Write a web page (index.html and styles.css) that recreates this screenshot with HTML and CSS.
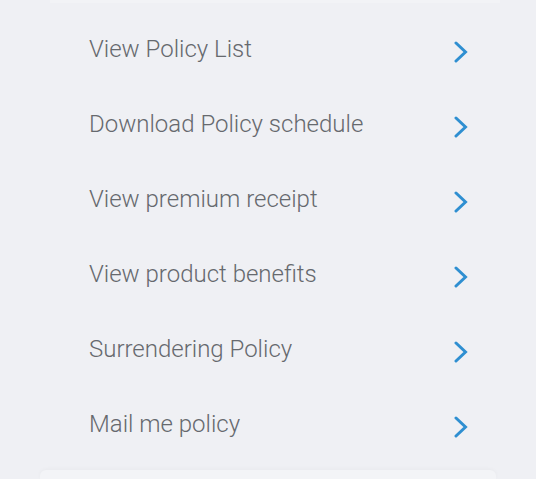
FILE: index.html
```html
<!DOCTYPE html>
<html>
<head>
<meta charset="utf-8">
<link rel="stylesheet" href="styles.css">
</head>
<body>
<div class="page">
  <div class="card-edge top"></div>
  <ul class="menu">
    <li class="item"><span class="label">View Policy List</span><svg class="chev" viewBox="0 0 14 22"><path d="M2 2 L11.5 11 L2 20"/></svg></li>
    <li class="item"><span class="label">Download Policy schedule</span><svg class="chev" viewBox="0 0 14 22"><path d="M2 2 L11.5 11 L2 20"/></svg></li>
    <li class="item"><span class="label">View premium receipt</span><svg class="chev" viewBox="0 0 14 22"><path d="M2 2 L11.5 11 L2 20"/></svg></li>
    <li class="item"><span class="label">View product benefits</span><svg class="chev" viewBox="0 0 14 22"><path d="M2 2 L11.5 11 L2 20"/></svg></li>
    <li class="item"><span class="label">Surrendering Policy</span><svg class="chev" viewBox="0 0 14 22"><path d="M2 2 L11.5 11 L2 20"/></svg></li>
    <li class="item"><span class="label">Mail me policy</span><svg class="chev" viewBox="0 0 14 22"><path d="M2 2 L11.5 11 L2 20"/></svg></li>
  </ul>
  <div class="card-edge bottom"></div>
</div>
</body>
</html>
```
FILE: styles.css
```css
html, body {
  margin: 0;
  padding: 0;
  background: #eff0f4;
  width: 536px;
  height: 479px;
  overflow: hidden;
}
.page {
  position: relative;
  width: 536px;
  height: 479px;
  display: flex;
  flex-direction: column;
}
.card-edge.top {
  height: 3px;
  margin: 0 36px 0 50px;
  background: #f2f3f6;
}
.menu {
  list-style: none;
  margin: 0;
  padding: 11px 0 0 0;
}
.item {
  height: 75px;
  display: flex;
  align-items: center;
  justify-content: space-between;
  padding: 0 68px 0 89px;
  box-sizing: border-box;
}
.label {
  font-family: "Roboto Light", Roboto, "Liberation Sans", sans-serif;
  font-weight: 300;
  font-size: 24px;
  color: #66696e;
  margin-top: -6px;
}
.chev {
  width: 14px;
  height: 22px;
  fill: none;
  stroke: #2f8fd1;
  stroke-width: 3;
  stroke-linecap: round;
  stroke-linejoin: miter;
}
.card-edge.bottom {
  margin: 6px 40px 0 40px;
  flex: 1;
  background: #f3f4f7;
  border-radius: 6px 6px 0 0;
  box-shadow: 0 -1px 4px rgba(0,0,0,0.03);
}
```
